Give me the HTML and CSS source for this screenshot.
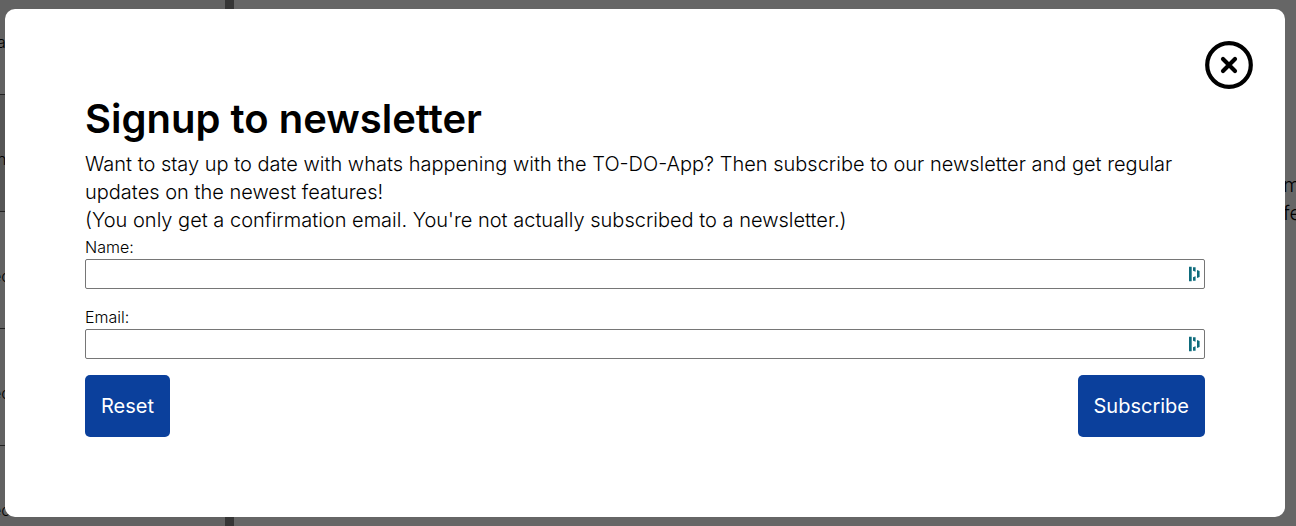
FILE: index.html
```html
<!DOCTYPE html>
<html lang="en">
<head>
<meta charset="utf-8">
<meta name="viewport" content="width=device-width, initial-scale=1">
<title>Signup to newsletter</title>
<link rel="stylesheet" href="styles.css">
</head>
<body>
<div class="app" aria-hidden="true">
  <ul class="sidebar">
    <li class="item">a</li>
    <li class="item item-active">n</li>
    <li class="item item-cut">ec</li>
    <li class="item item-cut">ec</li>
    <li class="item item-cut">ec</li>
  </ul>
  <div class="divider"></div>
  <div class="main">
    <p class="note">m<br>fe</p>
  </div>
</div>
<div class="backdrop">
  <section class="dialog" role="dialog" aria-modal="true" aria-labelledby="title">
    <button class="close" type="button" aria-label="Close">
      <svg viewBox="0 0 48 48" width="48" height="48" fill="none" stroke="#000" stroke-linecap="round">
        <circle cx="24" cy="24" r="21.8" stroke-width="4.2"/>
        <path d="M18 18L30 30M30 18L18 30" stroke-width="4.2"/>
      </svg>
    </button>
    <form class="form">
      <h1 class="title" id="title">Signup to newsletter</h1>
      <p class="intro">Want to stay up to date with whats happening with the TO-DO-App? Then subscribe to our newsletter and get regular updates on the newest features!<br>(You only get a confirmation email. You're not actually subscribed to a newsletter.)</p>
      <div class="field">
        <label for="name">Name:</label>
        <div class="box">
          <input class="input" id="name" type="text">
          <svg class="fill-icon" viewBox="0 0 12 16" width="12" height="16" fill="#0e6b7c"><path d="M1 .7h2.7v14.6H1zM5 1.3h2.6v4.4L5 4.8zM5 11.2l2.6-.9v4.4H5zM9 4l2.6 1v6L9 12z"/></svg>
        </div>
      </div>
      <div class="field">
        <label for="email">Email:</label>
        <div class="box">
          <input class="input" id="email" type="email">
          <svg class="fill-icon" viewBox="0 0 12 16" width="12" height="16" fill="#0e6b7c"><path d="M1 .7h2.7v14.6H1zM5 1.3h2.6v4.4L5 4.8zM5 11.2l2.6-.9v4.4H5zM9 4l2.6 1v6L9 12z"/></svg>
        </div>
      </div>
      <div class="actions">
        <button class="button" type="reset">Reset</button>
        <button class="button" type="submit">Subscribe</button>
      </div>
    </form>
  </section>
</div>
</body>
</html>
```
FILE: styles.css
```css
* {
  box-sizing: border-box;
  margin: 0;
  padding: 0;
}

body {
  font: 300 16px/24px Inter, "Liberation Sans", sans-serif;
  color: #000;
}

.app {
  position: fixed;
  inset: 0;
  display: flex;
  overflow: hidden;
  background: #fff;
}

.sidebar {
  flex: 0 0 225px;
  list-style: none;
  margin-top: -22px;
}

.item {
  height: 117px;
  padding-top: 52px;
  border-bottom: 1px solid #555;
  background: #f5f5f5;
  font-size: 16px;
  text-indent: -3px;
}

.item-active {
  background: #d8d8d8;
}

.item-cut {
  text-indent: -8px;
}

.divider {
  flex: 0 0 9px;
  background: #888;
}

.main {
  flex: 1;
  display: flex;
  justify-content: flex-end;
  padding-top: 171px;
}

.note {
  width: 13px;
  font-size: 20px;
  line-height: 28px;
}

.backdrop {
  position: fixed;
  inset: 0;
  overflow: auto;
  padding: 9px 11px 9px 5px;
  background: rgba(0, 0, 0, 0.6);
}

.dialog {
  display: flex;
  flex-direction: column;
  padding: 32px 32px 80px;
  border-radius: 10px;
  background: #fff;
}

.close {
  align-self: flex-end;
  width: 48px;
  height: 48px;
  border: 0;
  background: none;
  cursor: pointer;
}

.close svg {
  display: block;
}

.form {
  display: flex;
  flex-direction: column;
  padding: 0 48px;
}

.title {
  font-size: 40px;
  font-weight: 600;
  line-height: 60px;
}

.intro {
  padding: 1px 0;
  font-size: 20px;
  line-height: 28px;
}

.field {
  display: flex;
  flex-direction: column;
  margin-bottom: 16px;
}

.box {
  position: relative;
  display: flex;
}

.input {
  flex: 1;
  min-width: 0;
  height: 30px;
  padding: 0 24px 0 4px;
  border: 1px solid #767676;
  border-radius: 2px;
  background: #fff;
  font: inherit;
}

.fill-icon {
  position: absolute;
  top: 7px;
  right: 5px;
}

.actions {
  display: flex;
  justify-content: space-between;
}

.button {
  padding: 16px;
  border: 0;
  border-radius: 5px;
  background: #0b409c;
  color: #fff;
  font: 400 20px/30px Inter, "Liberation Sans", sans-serif;
  cursor: pointer;
}
```
